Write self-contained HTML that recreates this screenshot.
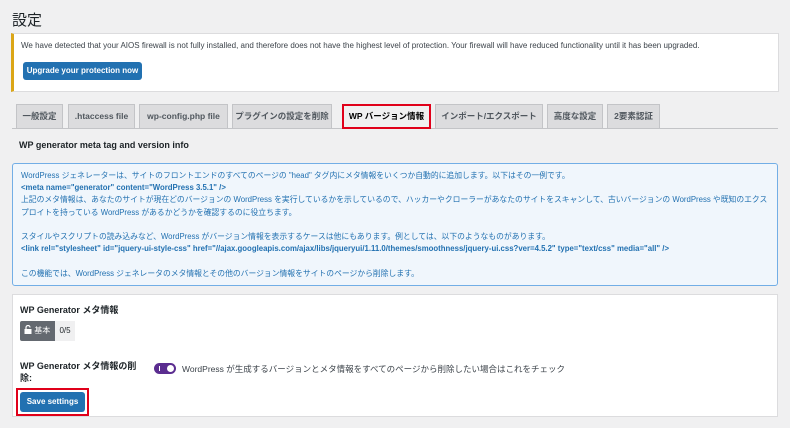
<!DOCTYPE html>
<html><head><meta charset="utf-8"><style>
*{box-sizing:border-box;margin:0;padding:0}
body{width:790px;height:428px;background:#f0f0f1;font-family:"Liberation Sans","Noto Sans CJK JP",sans-serif;color:#1d2327;position:relative;overflow:hidden;font-size:9px}
.a{position:absolute;white-space:nowrap}
h1{position:absolute;left:12px;top:9px;font-size:15px;font-weight:400}
.notice{left:11px;top:33px;width:768px;height:59px;background:#fff;border:1px solid #dcdcde;border-left:3px solid #dba617}
.btn{background:#2271b1;color:#fff;border-radius:3px;font-size:8px;font-weight:bold;text-align:center}
.tab{top:104px;height:25px;background:#dcdcde;border:1px solid #c3c4c7;font-size:8.5px;font-weight:bold;line-height:23px;text-align:center;color:#50575e}
.info{left:12px;top:163px;width:766px;height:123px;background:#f0f6fc;border:1px solid #72aee6;border-radius:3px;color:#2271b1;font-size:7.8px;line-height:12.2px;padding:6px 8px;white-space:normal}
.set{left:12px;top:294px;width:766px;height:123px;background:#fff;border:1px solid #dcdcde}
b{font-weight:bold}
</style></head><body>
<h1>設定</h1>
<div class="a notice">
<div class="a" style="left:7px;top:7px;font-size:8px;color:#3c434a">We have detected that your AIOS firewall is not fully installed, and therefore does not have the highest level of protection. Your firewall will have reduced functionality until it has been upgraded.</div>
<div class="a btn" style="left:9px;top:28px;width:119px;height:18px;line-height:18px">Upgrade your protection now</div>
</div>
<div class="a" style="left:12px;top:128px;width:766px;height:1px;background:#c3c4c7"></div>
<div class="a tab" style="left:16px;width:47px">一般設定</div>
<div class="a tab" style="left:68px;width:67px">.htaccess file</div>
<div class="a tab" style="left:139px;width:89px">wp-config.php file</div>
<div class="a tab" style="left:232px;width:100px">プラグインの設定を削除</div>
<div class="a tab" style="left:342px;width:89px;background:#f0f0f1;border:2px solid #e0001a;color:#000;line-height:21px">WP バージョン情報</div>
<div class="a tab" style="left:435px;width:108px">インポート/エクスポート</div>
<div class="a tab" style="left:547px;width:56px">高度な設定</div>
<div class="a tab" style="left:607px;width:53px">2要素認証</div>
<div class="a" style="left:19px;top:140px;font-size:9px;font-weight:bold">WP generator meta tag and version info</div>
<div class="a info">
WordPress ジェネレーターは、サイトのフロントエンドのすべてのページの "head" タグ内にメタ情報をいくつか自動的に追加します。以下はその一例です。<br>
<b>&lt;meta name="generator" content="WordPress 3.5.1" /&gt;</b><br>
上記のメタ情報は、あなたのサイトが現在どのバージョンの WordPress を実行しているかを示しているので、ハッカーやクローラーがあなたのサイトをスキャンして、古いバージョンの WordPress や既知のエクスプロイトを持っている WordPress があるかどうかを確認するのに役立ちます。<br><br>
スタイルやスクリプトの読み込みなど、WordPress がバージョン情報を表示するケースは他にもあります。例としては、以下のようなものがあります。<br>
<b>&lt;link rel="stylesheet" id="jquery-ui-style-css" href="//ajax.googleapis.com/ajax/libs/jqueryui/1.11.0/themes/smoothness/jquery-ui.css?ver=4.5.2" type="text/css" media="all" /&gt;</b><br><br>
この機能では、WordPress ジェネレータのメタ情報とその他のバージョン情報をサイトのページから削除します。
</div>
<div class="a set">
<div class="a" style="left:7px;top:8px;font-weight:bold">WP Generator メタ情報</div>
<div class="a" style="left:7px;top:26px;width:35px;height:20px;background:#646970;border-radius:2px 0 0 2px;color:#fff;font-size:8px;line-height:20px;padding-left:4px">
<svg width="8" height="9" viewBox="0 0 8 9" style="vertical-align:-1px"><path d="M2 4V2.5a2 2 0 0 1 4 0" fill="none" stroke="#fff" stroke-width="1.2"/><rect x="0.5" y="4" width="7" height="5" fill="#fff"/></svg> 基本</div>
<div class="a" style="left:42px;top:26px;width:20px;height:20px;background:#f0f0f1;font-size:8px;line-height:20px;text-align:center">0/5</div>
<div class="a" style="left:7px;top:65px;font-weight:bold;line-height:12px">WP Generator メタ情報の削<br>除:</div>
<div class="a" style="left:141px;top:68px;width:22px;height:11px;background:#5b2d90;border-radius:6px"><div class="a" style="right:2px;top:2px;width:7px;height:7px;background:#fff;border-radius:50%"></div><div class="a" style="left:5px;top:3px;width:1px;height:5px;background:#fff"></div></div>
<div class="a" style="left:169px;top:68px;font-size:8.5px;color:#3c434a">WordPress が生成するバージョンとメタ情報をすべてのページから削除したい場合はこれをチェック</div>
<div class="a" style="left:3px;top:93px;width:73px;height:28px;border:2px solid #e0001a"></div>
<div class="a btn" style="left:7px;top:97px;width:65px;height:20px;line-height:20px">Save settings</div>
</div>
</body></html>
